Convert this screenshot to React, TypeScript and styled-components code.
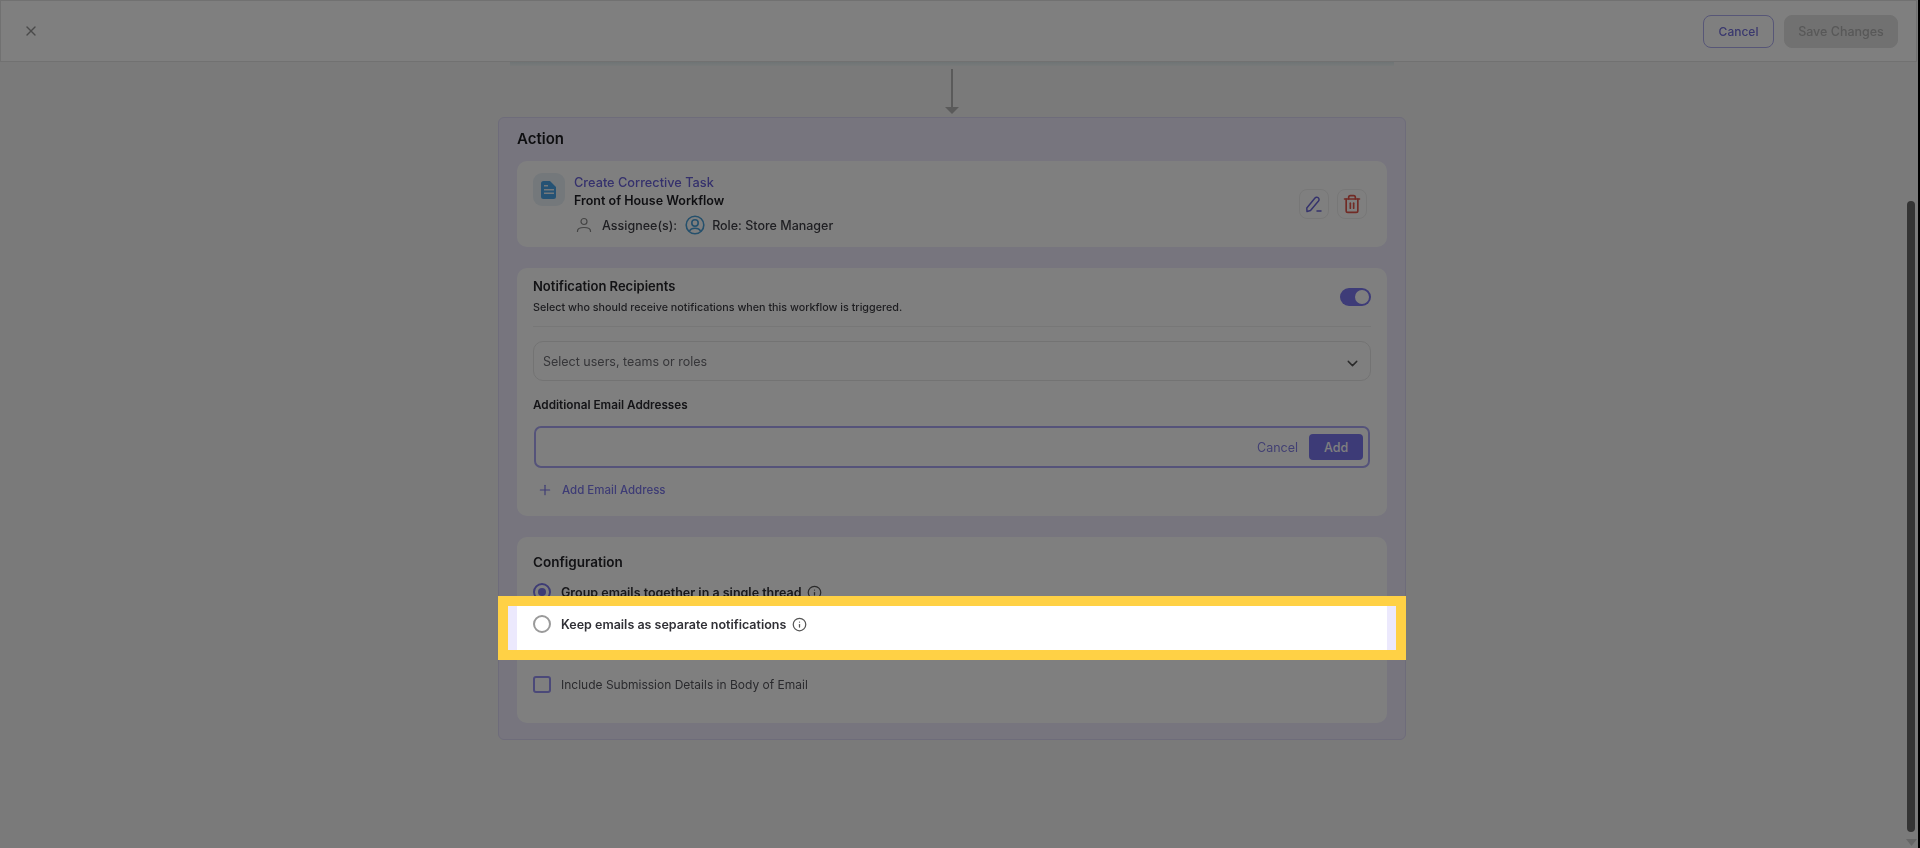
import React from 'react';
import styled, { createGlobalStyle, css } from 'styled-components';
import { X, Plus, ChevronDown, Info, Trash2 } from 'lucide-react';

const GlobalStyle = createGlobalStyle`
  html, body {
    margin: 0;
    padding: 0;
    height: 100%;
    overflow: hidden;
    background: #000;
    font-family: Inter, "Liberation Sans", sans-serif;
    color: #1f1f24;
  }
`;

// the reference is a scaled capture, text is slightly soft
const soft = css`
  filter: blur(0.45px);
`;

const Page = styled.div`
  width: 1918px;
  height: 848px;
  overflow: hidden;
  display: flex;
  flex-direction: column;
  background: #f5f5f5;
`;

const Overlay = styled.div`
  position: fixed;
  inset: 0 2px 0 0;
  z-index: 5;
  background: rgba(0, 0, 0, 0.5);
`;

const Scrollbar = styled.div`
  position: fixed;
  z-index: 6;
  right: 5px;
  top: 201px;
  bottom: 16px;
  width: 8px;
  border-radius: 4px;
  background: #343434;
`;

const ScrollDown = styled.svg`
  position: fixed;
  z-index: 6;
  right: 3px;
  bottom: 2px;
  width: 11px;
  height: 7px;
  color: #666;
`;

const Header = styled.header`
  box-sizing: border-box;
  width: 1917px;
  height: 62px;
  flex: none;
  display: flex;
  align-items: center;
  justify-content: space-between;
  padding: 0 18px 0 22px;
  background: #fff;
  border: 1px solid #e2e2e2;
`;

const CloseIcon = styled(X)`
  width: 16px;
  height: 16px;
  color: #959595;
`;

const HeaderActions = styled.div`
  display: flex;
  gap: 10px;
`;

const HeaderButton = styled.button<{ $primary?: boolean }>`
  box-sizing: border-box;
  height: 33px;
  padding: 0;
  width: ${(p) => (p.$primary ? '114px' : '71px')};
  border-radius: 8px;
  font: 500 ${(p) => (p.$primary ? '12.5px' : '12px')} Inter, sans-serif;
  border: 1px solid ${(p) => (p.$primary ? '#e2e2e2' : '#aeacef')};
  background: ${(p) => (p.$primary ? '#e2e2e2' : '#fff')};
  color: ${(p) => (p.$primary ? '#b0b0b0' : '#7470dc')};
  span {
    ${soft}
    display: block;
  }
`;

const Canvas = styled.main`
  width: 1904px;
  display: flex;
  flex-direction: column;
  align-items: center;
`;

const PrevEdge = styled.div`
  width: 884px;
  height: 4px;
  background: linear-gradient(#dde9ea, #eff4f4);
`;

const Arrow = styled.svg`
  display: block;
  width: 14px;
  height: 51px;
  color: #b4b4b4;
`;

const Panel = styled.section`
  box-sizing: border-box;
  width: 908px;
  height: 623px;
  padding: 10px 18px 0;
  border: 1px solid #dcd8f5;
  border-radius: 6px;
  background: #eeebfd;
  display: flex;
  flex-direction: column;
`;

const PanelTitle = styled.h2`
  ${soft}
  margin: 0 0 11px;
  font-size: 15px;
  line-height: 22px;
  font-weight: 600;
  color: #1c1c20;
`;

const Card = styled.div<{ $height: number; $gap?: number }>`
  box-sizing: border-box;
  height: ${(p) => p.$height}px;
  margin-bottom: ${(p) => p.$gap ?? 21}px;
  padding: 0 16px;
  background: #fff;
  border-radius: 10px;
  display: flex;
  flex-direction: column;
`;

const TaskRow = styled.div`
  display: flex;
  align-items: flex-start;
  height: 100%;
`;

const TaskTile = styled.div`
  width: 32px;
  height: 33px;
  margin: 12px 9px 0 0;
  border-radius: 9px;
  background: #e8f1f7;
  display: flex;
  align-items: center;
  justify-content: center;
  color: #4aa5e8;
`;

const TaskBody = styled.div`
  flex: 1;
  padding-top: 12.5px;
`;

const TaskName = styled.div`
  ${soft}
  font-size: 12.75px;
  line-height: 18px;
  font-weight: 500;
  color: #6a62d9;
`;

const TaskWorkflow = styled.div`
  ${soft}
  font-size: 12.5px;
  line-height: 18px;
  font-weight: 600;
  color: #1f1f24;
`;

const Assignees = styled.div`
  ${soft}
  display: flex;
  align-items: center;
  height: 22px;
  margin-top: 4.5px;
  font-size: 12.5px;
  font-weight: 500;
  color: #3f3f46;
`;

const AssigneeIcon = styled.svg`
  width: 16px;
  height: 16px;
  margin: 0 10px 0 2px;
  color: #8a8a8a;
`;

const RoleIcon = styled.svg`
  width: 20px;
  height: 20px;
  margin: 0 7px 0 8px;
  color: #4aa0d8;
`;

const TaskActions = styled.div`
  display: flex;
  gap: 8px;
  margin-top: 28px;
  margin-right: 4px;
`;

const IconButton = styled.button<{ $danger?: boolean }>`
  box-sizing: border-box;
  width: 30px;
  height: 30px;
  padding: 0;
  border: 1px solid #efefef;
  border-radius: 8px;
  background: #fff;
  display: flex;
  align-items: center;
  justify-content: center;
  color: ${(p) => (p.$danger ? '#e2574c' : '#6a66d8')};
`;

const RecipientsHead = styled.div`
  box-sizing: border-box;
  display: flex;
  justify-content: space-between;
  align-items: center;
  height: 59px;
  border-bottom: 1px solid #efefef;
`;

const HeadText = styled.div`
  align-self: flex-start;
  padding-top: 9px;
`;

const SectionTitle = styled.div`
  ${soft}
  font-size: 13px;
  line-height: 18px;
  font-weight: 600;
  color: #26262b;
`;

const SectionHint = styled.div`
  ${soft}
  margin-top: 5px;
  font-size: 10.75px;
  line-height: 16px;
  font-weight: 500;
  color: #3c3c42;
`;

const Toggle = styled.div`
  box-sizing: border-box;
  width: 31px;
  height: 18px;
  padding: 2px;
  border-radius: 9px;
  background: #7c78f0;
  display: flex;
  justify-content: flex-end;
  &::after {
    content: '';
    width: 14px;
    height: 14px;
    border-radius: 50%;
    background: #fff;
  }
`;

const Select = styled.div`
  box-sizing: border-box;
  height: 40px;
  margin-top: 14px;
  padding: 0 9px 0 9px;
  border: 1px solid #e6e6e6;
  border-radius: 10px;
  display: flex;
  align-items: center;
  justify-content: space-between;
  font-size: 12.5px;
  color: #6c6c72;
  span {
    ${soft}
  }
  svg {
    color: #555;
    margin-top: 4px;
  }
`;

const FieldLabel = styled.div`
  ${soft}
  margin-top: 15px;
  font-size: 11.75px;
  line-height: 18px;
  font-weight: 600;
  color: #2a2a30;
`;

const EmailInput = styled.div`
  box-sizing: border-box;
  height: 42px;
  margin: 12px 1px 0;
  padding-right: 5px;
  border: 2px solid #aaa7f5;
  border-radius: 7px;
  display: flex;
  align-items: center;
  justify-content: flex-end;
`;

const TextAction = styled.span`
  ${soft}
  margin-right: 11px;
  font-size: 12.5px;
  color: #8581e6;
`;

const AddButton = styled.button`
  box-sizing: border-box;
  width: 54px;
  height: 26px;
  padding: 0;
  border: 0;
  border-radius: 4px;
  background: #7a76ee;
  color: #fff;
  font: 500 12.5px Inter, sans-serif;
`;

const AddLink = styled.div`
  display: flex;
  align-items: center;
  height: 18px;
  margin-top: 13px;
  padding-left: 4px;
  font-size: 11.5px;
  font-weight: 500;
  color: #7d79ea;
  svg {
    margin-right: 9px;
  }
  span {
    ${soft}
  }
`;

const ConfigTitle = styled(SectionTitle)`
  margin-top: 16px;
  font-size: 13.5px;
`;

const OptionRow = styled.div`
  display: flex;
  align-items: center;
  gap: 10px;
  height: 18px;
  margin-top: 12px;
  font-size: 12.5px;
  font-weight: 600;
  color: #303036;
  span {
    ${soft}
  }
`;

// sits above the dim layer; the frame and the white strip are painted behind it
const KeepRow = styled(OptionRow)`
  box-sizing: border-box;
  position: relative;
  z-index: 10;
  height: 44px;
  margin-top: 5px;
  padding-bottom: 8px;
  &::before {
    content: '';
    position: absolute;
    z-index: -2;
    top: -10px;
    bottom: -10px;
    left: -35px;
    width: 908px;
    box-sizing: border-box;
    border: 10px solid #ffd145;
    background: #ece9fd;
  }
  &::after {
    content: '';
    position: absolute;
    z-index: -1;
    top: 0;
    bottom: 0;
    left: -16px;
    width: 870px;
    background: #fff;
  }
`;

const Radio = styled.div<{ $checked?: boolean }>`
  box-sizing: border-box;
  flex: none;
  width: 18px;
  height: 18px;
  border-radius: 50%;
  border: 2px solid ${(p) => (p.$checked ? '#7d79ea' : '#9a9a9a')};
  background: #fff;
  display: flex;
  align-items: center;
  justify-content: center;
  &::after {
    content: '';
    width: 8px;
    height: 8px;
    border-radius: 50%;
    background: ${(p) => (p.$checked ? '#7d79ea' : 'transparent')};
  }
`;

const InfoIcon = styled(Info)`
  width: 15px;
  height: 15px;
  margin-left: -4px;
  color: #555;
`;

const CheckRow = styled.div`
  display: flex;
  align-items: center;
  gap: 10px;
  height: 18px;
  margin-top: 25px;
  font-size: 12px;
  color: #55555b;
  span {
    ${soft}
  }
`;

const Checkbox = styled.div`
  box-sizing: border-box;
  flex: none;
  width: 18px;
  height: 17px;
  border: 2px solid #9692f2;
  border-radius: 3px;
`;

export default function App() {
  return (
    <Page>
      <GlobalStyle />
      <Header>
        <CloseIcon strokeWidth={2} />
        <HeaderActions>
          <HeaderButton><span>Cancel</span></HeaderButton>
          <HeaderButton $primary><span>Save Changes</span></HeaderButton>
        </HeaderActions>
      </Header>
      <Canvas>
        <PrevEdge />
        <Arrow viewBox="0 0 14 51">
          <path d="M7 3v38" stroke="currentColor" strokeWidth="2" />
          <path d="M0 41h14L7 48z" fill="currentColor" />
        </Arrow>
        <Panel>
          <PanelTitle>Action</PanelTitle>
          <Card $height={86}>
            <TaskRow>
              <TaskTile>
                <svg width="16" height="18" viewBox="0 0 16 18" fill="currentColor">
                  <path d="M2.5 0H9l6 6v9.5a2.5 2.5 0 0 1-2.5 2.5h-10A2.5 2.5 0 0 1 0 15.500V2.500A2.500 2.500 0 0 1 2.500 0zM3 8v1.500h10V8zm0 3.500V13h10v-1.500zM3 4v1.500h4V4z" fillRule="evenodd" />
                </svg>
              </TaskTile>
              <TaskBody>
                <TaskName>Create Corrective Task</TaskName>
                <TaskWorkflow>Front of House Workflow</TaskWorkflow>
                <Assignees>
                  <AssigneeIcon viewBox="0 0 16 16" fill="none" stroke="currentColor" strokeWidth="1.2">
                    <circle cx="8" cy="4.500" r="3" />
                    <path d="M1.500 15v-1c0-2 2-3.500 6.500-3.500s6.500 1.500 6.500 3.500v1" />
                  </AssigneeIcon>
                  Assignee(s):
                  <RoleIcon viewBox="0 0 20 20" fill="none" stroke="currentColor" strokeWidth="1.6">
                    <circle cx="10" cy="10" r="8.800" />
                    <circle cx="10" cy="8" r="3.200" />
                    <path d="M4.500 16c1-2 3-2.800 5.500-2.800s4.500.8 5.500 2.800" />
                  </RoleIcon>
                  Role: Store Manager
                </Assignees>
              </TaskBody>
              <TaskActions>
                <IconButton aria-label="Edit">
                  <svg width="18" height="18" viewBox="0 0 18 18" fill="none" stroke="currentColor" strokeWidth="1.500" strokeLinejoin="round" strokeLinecap="round">
                    <path d="M1.800 13l8.200-10a2.300 2.300 0 0 1 3.500 3L5.500 15.500l-3.500 1z" />
                    <path d="M12 16h4" />
                  </svg>
                </IconButton>
                <IconButton $danger aria-label="Delete">
                  <Trash2 size={20} strokeWidth={2} />
                </IconButton>
              </TaskActions>
            </TaskRow>
          </Card>
          <Card $height={248}>
            <RecipientsHead>
              <HeadText>
                <SectionTitle>Notification Recipients</SectionTitle>
                <SectionHint>Select who should receive notifications when this workflow is triggered.</SectionHint>
              </HeadText>
              <Toggle />
            </RecipientsHead>
            <Select>
              <span>Select users, teams or roles</span>
              <ChevronDown size={17} strokeWidth={2} />
            </Select>
            <FieldLabel>Additional Email Addresses</FieldLabel>
            <EmailInput>
              <TextAction>Cancel</TextAction>
              <AddButton>Add</AddButton>
            </EmailInput>
            <AddLink>
              <Plus size={16} strokeWidth={1.8} />
              <span>Add Email Address</span>
            </AddLink>
          </Card>
          <Card $height={186} $gap={0}>
            <ConfigTitle>Configuration</ConfigTitle>
            <OptionRow>
              <Radio $checked />
              <span>Group emails together in a single thread</span>
              <InfoIcon />
            </OptionRow>
            <KeepRow>
              <Radio />
              <span>Keep emails as separate notifications</span>
              <InfoIcon />
            </KeepRow>
            <CheckRow>
              <Checkbox />
              <span>Include Submission Details in Body of Email</span>
            </CheckRow>
          </Card>
        </Panel>
      </Canvas>
      <Overlay />
      <Scrollbar />
      <ScrollDown viewBox="0 0 11 7"><path d="M0 0h11L5.500 7z" fill="currentColor" /></ScrollDown>
    </Page>
  );
}
